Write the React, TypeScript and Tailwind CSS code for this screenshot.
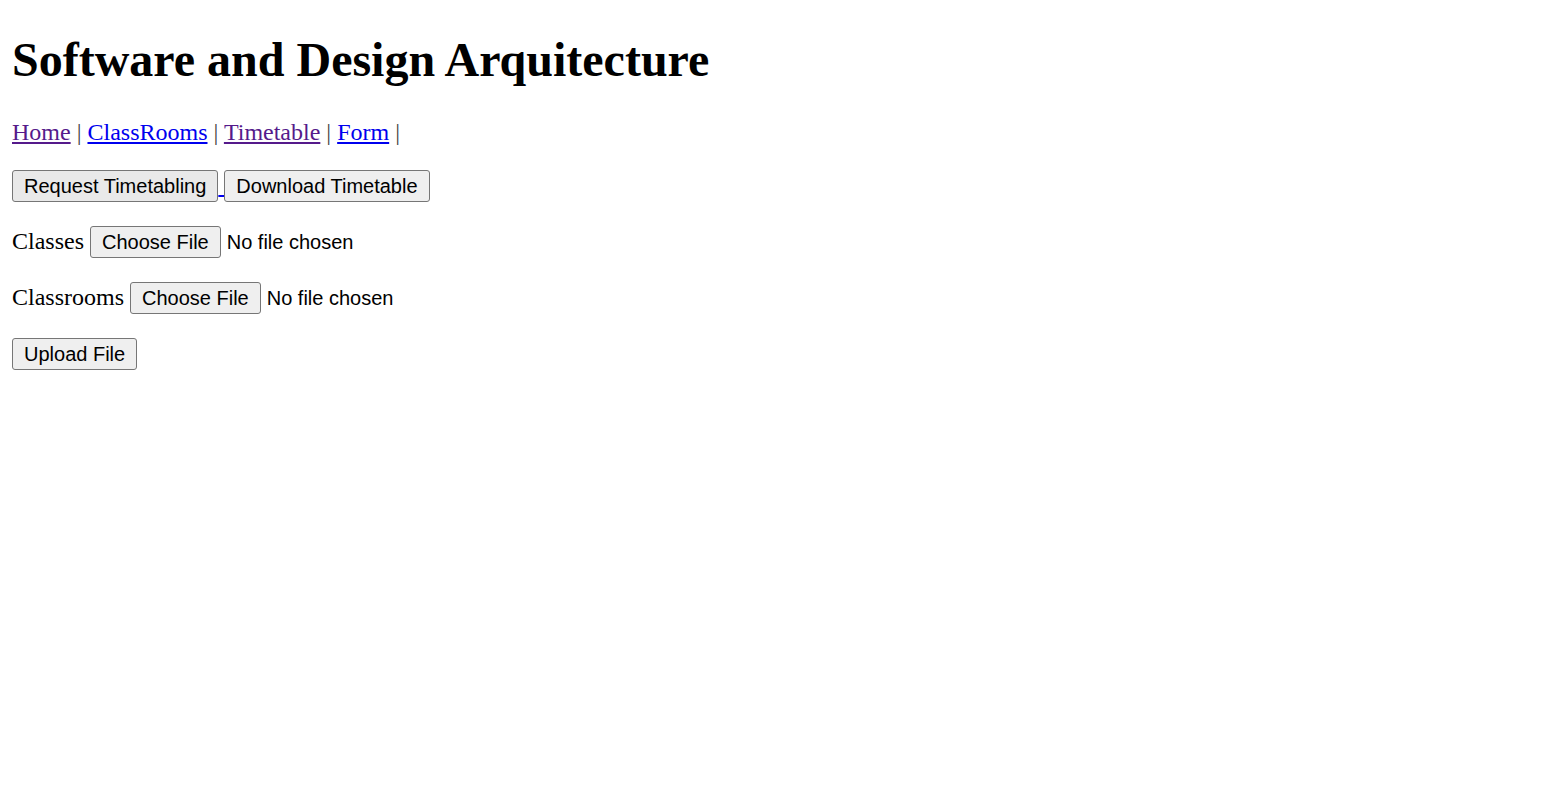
export default function App() {
  const btn =
    "inline-block align-baseline bg-[#efefef] border border-[#767676] rounded-[3px] px-[11px] pt-[4px] pb-[3px] text-[20px] leading-[23px] text-black font-['Arial','Liberation_Sans',sans-serif]";

  return (
    <main className="min-h-screen bg-white px-[12px] pt-[32px] text-black font-['Times_New_Roman','Liberation_Serif',serif] text-[24px] leading-[27.6px]">
      <h1 className="text-[48px] leading-[55px] font-bold mb-[32px]">Software and Design Arquitecture</h1>

      <p className="mb-[23px]">
        <a href="#" className="underline text-[#551a8b]">Home</a> <span className="text-[#444]">|</span>{" "}
        <a href="#" className="underline text-[#0000ee]">ClassRooms</a> <span className="text-[#444]">|</span>{" "}
        <a href="#" className="underline text-[#551a8b]">Timetable</a> <span className="text-[#444]">|</span>{" "}
        <a href="#" className="underline text-[#0000ee]">Form</a> <span className="text-[#444]">|</span>
      </p>

      <p className="mb-[24px]">
        <a href="#" className="underline text-[#0000ee]">
          <button className={btn + " !bg-[#e9e9e9]"}>Request Timetabling</button>{" "}
        </a>
        <a href="#" className="underline text-[#0000ee]">
          <button className={btn}>Download Timetable</button>
        </a>
      </p>

      <form onSubmit={(e) => e.preventDefault()}>
        <p className="mb-[24px]">
          Classes{" "}
          <label className="inline-block align-baseline">
            <input type="file" className="hidden" />
            <span className={btn}>Choose File</span>
            <span className="ml-[6px] text-[20px] font-['Arial','Liberation_Sans',sans-serif]">No file chosen</span>
          </label>
        </p>

        <p className="mb-[24px]">
          Classrooms{" "}
          <label className="inline-block align-baseline">
            <input type="file" className="hidden" />
            <span className={btn}>Choose File</span>
            <span className="ml-[6px] text-[20px] font-['Arial','Liberation_Sans',sans-serif]">No file chosen</span>
          </label>
        </p>

        <p>
          <button type="submit" className={btn}>Upload File</button>
        </p>
      </form>
    </main>
  );
}
